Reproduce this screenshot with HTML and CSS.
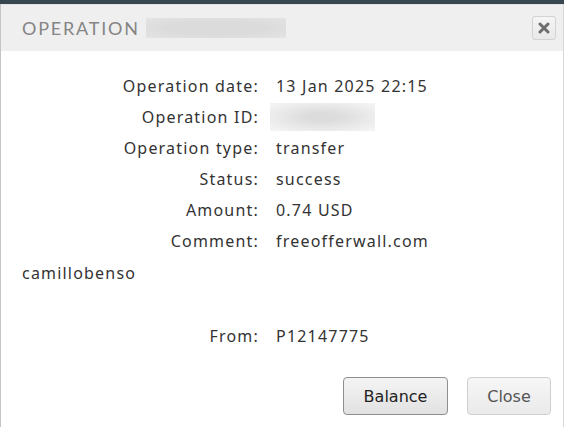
FILE: index.html
```html
<!DOCTYPE html>
<html>
<head>
<meta charset="utf-8">
<link rel="stylesheet" href="styles.css">
</head>
<body>
<div class="topbar"></div>
<div class="dialog">
  <div class="header">
    <span class="title">OPERATION</span>
    <span class="blur blur-title"></span>
    <button class="xbtn" aria-label="close">
      <svg width="12" height="12" viewBox="0 0 12 12"><path d="M2 2 L10 10 M10 2 L2 10" stroke="#6e6e6e" stroke-width="3" stroke-linecap="round"/></svg>
    </button>
  </div>
  <div class="content">
    <div class="details">
      <div class="label">Operation date:</div><div class="value">13 Jan 2025 22:15</div>
      <div class="label">Operation ID:</div><div class="value"><span class="blur blur-id"></span></div>
      <div class="label">Operation type:</div><div class="value">transfer</div>
      <div class="label">Status:</div><div class="value">success</div>
      <div class="label">Amount:</div><div class="value">0.74 USD</div>
      <div class="label">Comment:</div><div class="value">freeofferwall.com</div>
    </div>
    <div class="extra">camillobenso</div>
    <div class="details from">
      <div class="label">From:</div><div class="value">P12147775</div>
    </div>
  </div>
  <div class="footer">
    <button class="btn btn-primary">Balance</button>
    <button class="btn btn-close">Close</button>
  </div>
</div>
</body>
</html>
```
FILE: styles.css
```css
html, body {
  margin: 0;
  padding: 0;
  background: #ffffff;
}
body {
  width: 564px;
  height: 427px;
  overflow: hidden;
}
.topbar {
  height: 4px;
  background: #37464f;
}
.dialog {
  height: 423px;
  border-left: 1px solid #c4c4c4;
  border-right: 1px solid #d8d8d8;
  display: flex;
  flex-direction: column;
  box-sizing: border-box;
}
.header {
  height: 47px;
  background: #efefef;
  display: flex;
  align-items: center;
  padding: 0 7px 0 21px;
  border-top: 1px solid #e2e2e2;
  box-sizing: border-box;
}
.title {
  font-family: "Lato", sans-serif;
  font-size: 18px;
  letter-spacing: 1.8px;
  color: #858585;
  margin-right: 6px;
}
.blur {
  display: inline-block;
  background: radial-gradient(ellipse at center, #d9d9d9 40%, #e6e6e6 100%);
}
.blur-title {
  width: 140px;
  height: 20px;
  background: radial-gradient(ellipse at center, #dbdbdb 50%, #e4e4e4 100%);
}
.xbtn {
  margin-left: auto;
  width: 24px;
  height: 24px;
  border: 1px solid #d2d2d2;
  border-radius: 3px;
  background: linear-gradient(#f5f5f5, #e9e9e9);
  padding: 0;
  display: flex;
  align-items: center;
  justify-content: center;
}
.content {
  font-family: "Noto Sans", sans-serif;
  font-size: 16px;
  letter-spacing: 1.2px;
  color: #333333;
  padding: 24px 0 0 21px;
}
.details {
  display: grid;
  grid-template-columns: 237px auto;
  column-gap: 17px;
  row-gap: 9px;
  line-height: 22px;
}
.label {
  text-align: right;
}
.value {
  display: flex;
  align-items: center;
  height: 22px;
}
.blur-id {
  width: 105px;
  height: 28px;
  margin-left: -6px;
  background: radial-gradient(ellipse at center, #dcdcdc 20%, #f3f3f3 90%);
}
.extra {
  margin-top: 10px;
  line-height: 22px;
}
.from {
  margin-top: 41px;
}
.footer {
  margin-top: auto;
  display: flex;
  justify-content: flex-end;
  gap: 19px;
  padding: 0 12px 12px 0;
}
.btn {
  font-family: "DejaVu Sans", sans-serif;
  font-size: 16px;
  height: 38px;
  border-radius: 4px;
  background: linear-gradient(#f4f4f4, #e2e2e2);
  padding: 0;
}
.btn-primary {
  width: 105px;
  border: 1px solid #8e8e8e;
  color: #222222;
}
.btn-close {
  width: 84px;
  border: 1px solid #cfcfcf;
  color: #555555;
  background: linear-gradient(#f6f6f6, #eaeaea);
}
```
